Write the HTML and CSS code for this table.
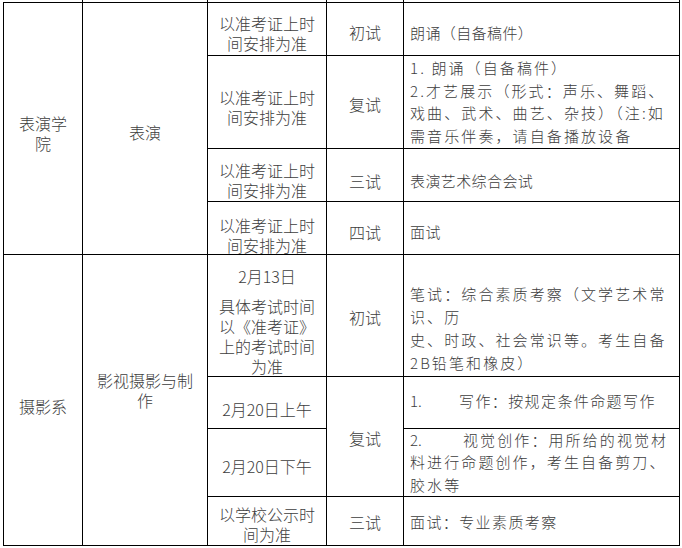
FILE: index.html
```html
<!DOCTYPE html>
<html lang="zh-CN">
<head>
<meta charset="utf-8">
<title>考试安排</title>
<link rel="stylesheet" href="styles.css">
</head>
<body>
<div class="strip">
  <div></div><div></div><div></div><div></div><div></div>
</div>
<div class="sheet">
  <!-- 表演学院 -->
  <div class="cell span4 pt-9"><p>表演学<br>院</p></div>
  <div class="cell span4 pt-7"><p>表演</p></div>
  <div class="cell pt-7"><p>以准考证上时<br>间安排为准</p></div>
  <div class="cell pt-6"><p>初试</p></div>
  <div class="cell desc ls-a pt-8"><p>朗诵（自备稿件）</p></div>

  <div class="cell pt-9"><p>以准考证上时<br>间安排为准</p></div>
  <div class="cell pt-4"><p>复试</p></div>
  <div class="cell desc ls-c lh-22"><p>1. 朗诵（自备稿件）<br>2.才艺展示（形式：声乐、舞蹈、<br>戏曲、武术、曲艺、杂技）（注:如<br>需音乐伴奏，请自备播放设备</p></div>

  <div class="cell pt-10"><p>以准考证上时<br>间安排为准</p></div>
  <div class="cell pt-12"><p>三试</p></div>
  <div class="cell desc ls-a pt-12"><p>表演艺术综合会试</p></div>

  <div class="cell pt-14"><p>以准考证上时<br>间安排为准</p></div>
  <div class="cell pt-7"><p>四试</p></div>
  <div class="cell desc ls-a pt-7"><p>面试</p></div>

  <!-- 摄影系 -->
  <div class="cell span4 pt-11"><p>摄影系</p></div>
  <div class="cell span4 pb-21"><p>影视摄影与制<br>作</p></div>
  <div class="cell col pt-10">
    <p class="date">2月13日</p>
    <p>具体考试时间<br>以《准考证》<br>上的考试时间<br>为准</p>
  </div>
  <div class="cell pt-2"><p>初试</p></div>
  <div class="cell desc ls-c lh-23 pt-24"><p>笔试：综合素质考察（文学艺术常<br>识、历<br>史、时政、社会常识等。考生自备<br>2B铅笔和橡皮）</p></div>

  <div class="cell pt-12"><p>2月20日上午</p></div>
  <div class="cell span2 pt-3"><p>复试</p></div>
  <div class="cell desc ls-b pb-3"><p><span class="num n1">1.</span>写作：按规定条件命题写作</p></div>

  <div class="cell pt-7"><p>2月20日下午</p></div>
  <div class="cell desc ls-c lh-22"><p><span class="num n2">2.</span>视觉创作：用所给的视觉材<br>料进行命题创作，考生自备剪刀、<br>胶水等</p></div>

  <div class="cell pt-6"><p>以学校公示时<br>间为准</p></div>
  <div class="cell pt-2"><p>三试</p></div>
  <div class="cell desc ls-b pt-2"><p>面试：专业素质考察</p></div>
</div>
</body>
</html>
```
FILE: styles.css
```css
html, body {
  margin: 0;
  padding: 0;
  background: #fff;
}

body {
  width: 682px;
  height: 548px;
  overflow: hidden;
  font-family: "Noto Sans CJK SC", "Noto Sans", sans-serif;
  font-weight: 300;
  color: #3d3d3d;
}

.strip {
  margin-left: 3px;
  width: 677px;
  height: 2px;
  display: grid;
  grid-template-columns: 79px 124px 118px 76px 275px;
  column-gap: 1px;
  padding-right: 1px;
  box-sizing: border-box;
  background: #000;
}

.strip div {
  background: #fff;
}

.sheet {
  margin-left: 3px;
  width: 677px;
  box-sizing: border-box;
  padding: 1px;
  gap: 1px;
  background: #000;
  display: grid;
  grid-template-columns: 78px 124px 118px 76px 275px;
  grid-template-rows: 52px 92px 52px 52px 121px 51px 67px 48px;
}

.cell {
  background: #fff;
  display: flex;
  align-items: center;
  justify-content: center;
  text-align: center;
  font-size: 16px;
  line-height: 20px;
  box-sizing: border-box;
}

.cell.col {
  flex-direction: column;
}

.cell p {
  margin: 0;
}

.cell .date {
  margin-bottom: 10px;
}

.span4 { grid-row: span 4; }
.span2 { grid-row: span 2; }

.desc {
  justify-content: flex-start;
  text-align: left;
  padding-left: 6px;
  padding-right: 0;
  font-size: 15px;
  white-space: nowrap;
}

.ls-a { letter-spacing: 0.4px; }
.ls-b { letter-spacing: 1.4px; }
.ls-c { letter-spacing: 2.1px; }

.lh-22 { line-height: 22.5px; }
.lh-23 { line-height: 23px; }

.num {
  display: inline-block;
  letter-spacing: 0;
}
.n1 { width: 49px; }
.n2 { width: 53px; }

.pt-2 { padding-top: 2px; }
.pt-3 { padding-top: 3px; }
.pt-4 { padding-top: 4px; }
.pt-6 { padding-top: 6px; }
.pt-7 { padding-top: 7px; }
.pt-8 { padding-top: 8px; }
.pt-9 { padding-top: 9px; }
.pt-10 { padding-top: 10px; }
.pt-11 { padding-top: 11px; }
.pt-12 { padding-top: 12px; }
.pt-14 { padding-top: 14px; }
.pt-24 { padding-top: 24px; }
.pb-3 { padding-bottom: 3px; }
.pb-21 { padding-bottom: 21px; }
```
